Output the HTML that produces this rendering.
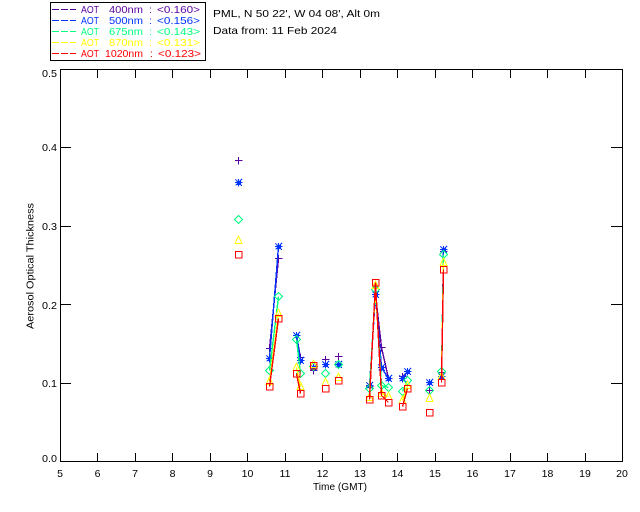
<!DOCTYPE html>
<html>
<head>
<meta charset="utf-8">
<style>
html,body{margin:0;padding:0;background:#fff;width:640px;height:512px;overflow:hidden}
svg{display:block}
text{font-family:"Liberation Sans",sans-serif;font-size:10.5px;fill:#000}
.c{text-anchor:middle}
.s{shape-rendering:crispEdges;fill:none}
</style>
</head>
<body>
<svg width="640" height="512" viewBox="0 0 640 512" xmlns="http://www.w3.org/2000/svg">
<defs>
<g id="p" class="s"><path d="M-3.5 0H4M0 -3.5V4"/></g>
<g id="a" class="s"><path d="M-3.5 0H4M0 -3.5V4M-3 -3L3.5 3.5M-3 3L3.5 -3.5M-1 -1H2V2H-1Z"/></g>
<path id="d" class="s" d="M0 -4L4 0L0 4L-4 0Z"/>
<path id="t" class="s" d="M0 -4.5L3.5 3H-3.5Z"/>
<rect id="q" class="s" x="-3" y="-3" width="6.5" height="6.5"/>
</defs>

<!-- Axes -->
<g class="s" stroke="#000" stroke-width="1">
<rect x="60.5" y="69.5" width="562" height="392"/>
<path d="M97.5 461V453M135.5 461V453M172.5 461V453M210.5 461V453M247.5 461V453M285.5 461V453M322.5 461V453M360.5 461V453M397.5 461V453M435.5 461V453M472.5 461V453M510.5 461V453M547.5 461V453M585.5 461V453"/>
<path d="M97.5 70V78M135.5 70V78M172.5 70V78M210.5 70V78M247.5 70V78M285.5 70V78M322.5 70V78M360.5 70V78M397.5 70V78M435.5 70V78M472.5 70V78M510.5 70V78M547.5 70V78M585.5 70V78"/>
<path d="M61 383.5H71M61 304.5H71M61 226.5H71M61 147.5H71"/>
<path d="M622 383.5H611M622 304.5H611M622 226.5H611M622 147.5H611"/>
</g>

<!-- Y tick labels -->
<text x="42" y="77" textLength="15" lengthAdjust="spacingAndGlyphs">0.5</text>
<text x="42" y="151" textLength="15" lengthAdjust="spacingAndGlyphs">0.4</text>
<text x="42" y="230" textLength="15" lengthAdjust="spacingAndGlyphs">0.3</text>
<text x="42" y="309" textLength="15" lengthAdjust="spacingAndGlyphs">0.2</text>
<text x="42" y="387" textLength="15" lengthAdjust="spacingAndGlyphs">0.1</text>
<text x="42" y="462" textLength="15" lengthAdjust="spacingAndGlyphs">0.0</text>

<!-- X tick labels -->
<g class="c">
<text class="c" x="60" y="477">5</text>
<text class="c" x="97.5" y="477">6</text>
<text class="c" x="135" y="477">7</text>
<text class="c" x="172.5" y="477">8</text>
<text class="c" x="210" y="477">9</text>
<text class="c" x="247.5" y="477">10</text>
<text class="c" x="285" y="477">11</text>
<text class="c" x="322.5" y="477">12</text>
<text class="c" x="360" y="477">13</text>
<text class="c" x="397.5" y="477">14</text>
<text class="c" x="435" y="477">15</text>
<text class="c" x="472.5" y="477">16</text>
<text class="c" x="510" y="477">17</text>
<text class="c" x="547.5" y="477">18</text>
<text class="c" x="585" y="477">19</text>
<text class="c" x="622" y="477">20</text>
</g>

<text x="313" y="490" textLength="54" lengthAdjust="spacingAndGlyphs">Time (GMT)</text>
<text transform="translate(33.5,329) rotate(-90)" x="0" y="0" textLength="126" lengthAdjust="spacingAndGlyphs">Aerosol Optical Thickness</text>

<!-- Header text -->
<text x="213" y="17" textLength="167" lengthAdjust="spacingAndGlyphs">PML, N 50 22', W 04 08', Alt 0m</text>
<text x="213" y="34" textLength="124" lengthAdjust="spacingAndGlyphs">Data from: 11 Feb 2024</text>

<!-- Legend -->
<rect class="s" x="50.5" y="2.5" width="155" height="58" stroke="#000"/>
<g class="s" stroke-width="1" stroke-dasharray="7 2">
<path d="M52 9.5H76" stroke="#5a00a0"/>
<path d="M52 20.5H76" stroke="#0033ff"/>
<path d="M52 31.5H76" stroke="#00ff80"/>
<path d="M52 42.5H76" stroke="#ffff00"/>
<path d="M52 53.5H76" stroke="#ff0000"/>
</g>
<text style="fill:#5a00a0" x="81" y="13" textLength="18" lengthAdjust="spacingAndGlyphs">AOT</text>
<text style="fill:#5a00a0" x="109" y="13" textLength="34" lengthAdjust="spacingAndGlyphs">400nm</text>
<text style="fill:#5a00a0" x="149" y="13">:</text>
<text style="fill:#5a00a0" x="157" y="13" textLength="43" lengthAdjust="spacingAndGlyphs">&lt;0.160&gt;</text>
<text style="fill:#0033ff" x="81" y="24" textLength="18" lengthAdjust="spacingAndGlyphs">AOT</text>
<text style="fill:#0033ff" x="109" y="24" textLength="34" lengthAdjust="spacingAndGlyphs">500nm</text>
<text style="fill:#0033ff" x="149" y="24">:</text>
<text style="fill:#0033ff" x="157" y="24" textLength="43" lengthAdjust="spacingAndGlyphs">&lt;0.156&gt;</text>
<text style="fill:#00ff80" x="81" y="35" textLength="18" lengthAdjust="spacingAndGlyphs">AOT</text>
<text style="fill:#00ff80" x="109" y="35" textLength="34" lengthAdjust="spacingAndGlyphs">675nm</text>
<text style="fill:#00ff80" x="149" y="35">:</text>
<text style="fill:#00ff80" x="157" y="35" textLength="43" lengthAdjust="spacingAndGlyphs">&lt;0.143&gt;</text>
<text style="fill:#ffff00" x="81" y="46" textLength="18" lengthAdjust="spacingAndGlyphs">AOT</text>
<text style="fill:#ffff00" x="109" y="46" textLength="34" lengthAdjust="spacingAndGlyphs">870nm</text>
<text style="fill:#ffff00" x="149" y="46">:</text>
<text style="fill:#ffff00" x="157" y="46" textLength="43" lengthAdjust="spacingAndGlyphs">&lt;0.131&gt;</text>
<text style="fill:#ff0000" x="81" y="57" textLength="18" lengthAdjust="spacingAndGlyphs">AOT</text>
<text style="fill:#ff0000" x="105" y="57" textLength="38" lengthAdjust="spacingAndGlyphs">1020nm</text>
<text style="fill:#ff0000" x="150" y="57">:</text>
<text style="fill:#ff0000" x="158" y="57" textLength="43" lengthAdjust="spacingAndGlyphs">&lt;0.123&gt;</text>

<!-- Purple series -->
<g stroke="#5a00a0">
<g class="s" stroke-width="1.4">
<path d="M269.5 348.5L278.5 258.5"/><path d="M296.5 335.5L300.5 357.5"/>
<path d="M369.5 386.5L375.5 294.5L381.5 347.5L388.5 378.5"/><path d="M402.5 376.5L407.5 371.5"/><path d="M441.5 372.5L443.5 251.5"/>
</g>
<use href="#p" x="238.5" y="160.5"/><use href="#p" x="269.5" y="348.5"/><use href="#p" x="278.5" y="258.5"/><use href="#p" x="296.5" y="335.5"/><use href="#p" x="300.5" y="357.5"/><use href="#p" x="313.5" y="370.5"/><use href="#p" x="325.5" y="359.5"/><use href="#p" x="338.5" y="356.5"/><use href="#p" x="369.5" y="386.5"/><use href="#p" x="375.5" y="294.5"/><use href="#p" x="381.5" y="347.5"/><use href="#p" x="388.5" y="378.5"/><use href="#p" x="402.5" y="376.5"/><use href="#p" x="407.5" y="371.5"/><use href="#p" x="429.5" y="390.5"/><use href="#p" x="441.5" y="372.5"/><use href="#p" x="443.5" y="251.5"/>
</g>

<!-- Blue series -->
<g stroke="#0033ff">
<g class="s" stroke-width="1.4">
<path d="M269.5 358.5L278.5 246.5"/><path d="M296.5 335.5L300.5 360.5"/>
<path d="M369.5 385.5L375.5 294.5L381.5 367.5L388.5 378.5"/><path d="M402.5 378.5L407.5 371.5"/><path d="M441.5 376.5L443.5 249.5"/>
</g>
<use href="#a" x="238.5" y="182.5"/><use href="#a" x="269.5" y="358.5"/><use href="#a" x="278.5" y="246.5"/><use href="#a" x="296.5" y="335.5"/><use href="#a" x="300.5" y="360.5"/><use href="#a" x="313.5" y="367.5"/><use href="#a" x="325.5" y="364.5"/><use href="#a" x="338.5" y="364.5"/><use href="#a" x="369.5" y="385.5"/><use href="#a" x="375.5" y="294.5"/><use href="#a" x="381.5" y="367.5"/><use href="#a" x="388.5" y="378.5"/><use href="#a" x="402.5" y="378.5"/><use href="#a" x="407.5" y="371.5"/><use href="#a" x="429.5" y="382.5"/><use href="#a" x="441.5" y="376.5"/><use href="#a" x="443.5" y="249.5"/>
</g>

<!-- Green series -->
<g stroke="#00ff80">
<g class="s" stroke-width="1.4">
<path d="M269.5 370.5L278.5 296.5"/><path d="M296.5 339.5L300.5 373.5"/>
<path d="M369.5 388.5L375.5 289.5L381.5 385.5L388.5 387.5"/><path d="M402.5 391.5L407.5 380.5"/><path d="M441.5 371.5L443.5 254.5"/>
</g>
<use href="#d" x="238.5" y="219.5"/><use href="#d" x="269.5" y="370.5"/><use href="#d" x="278.5" y="296.5"/><use href="#d" x="296.5" y="339.5"/><use href="#d" x="300.5" y="373.5"/><use href="#d" x="313.5" y="366.5"/><use href="#d" x="325.5" y="373.5"/><use href="#d" x="338.5" y="364.5"/><use href="#d" x="369.5" y="388.5"/><use href="#d" x="375.5" y="289.5"/><use href="#d" x="381.5" y="385.5"/><use href="#d" x="388.5" y="387.5"/><use href="#d" x="402.5" y="391.5"/><use href="#d" x="407.5" y="380.5"/><use href="#d" x="429.5" y="390.5"/><use href="#d" x="441.5" y="371.5"/><use href="#d" x="443.5" y="254.5"/>
</g>

<!-- Yellow series -->
<g stroke="#ffff00">
<g class="s" stroke-width="1.4">
<path d="M269.5 381.5L278.5 313.5"/><path d="M296.5 367.5L300.5 386.5"/>
<path d="M369.5 397.5L375.5 285.5L381.5 393.5L388.5 396.5"/><path d="M402.5 400.5L407.5 385.5"/><path d="M441.5 376.5L443.5 262.5"/>
</g>
<use href="#t" x="238.5" y="240.5"/><use href="#t" x="269.5" y="381.5"/><use href="#t" x="278.5" y="313.5"/><use href="#t" x="296.5" y="367.5"/><use href="#t" x="300.5" y="386.5"/><use href="#t" x="313.5" y="364.5"/><use href="#t" x="325.5" y="382.5"/><use href="#t" x="338.5" y="377.5"/><use href="#t" x="369.5" y="397.5"/><use href="#t" x="375.5" y="285.5"/><use href="#t" x="381.5" y="393.5"/><use href="#t" x="388.5" y="396.5"/><use href="#t" x="402.5" y="400.5"/><use href="#t" x="407.5" y="385.5"/><use href="#t" x="429.5" y="398.5"/><use href="#t" x="441.5" y="376.5"/><use href="#t" x="443.5" y="262.5"/>
</g>

<!-- Red series -->
<g stroke="#ff0000">
<g class="s" stroke-width="1.4">
<path d="M269.5 386.5L278.5 318.5"/><path d="M296.5 373.5L300.5 393.5"/>
<path d="M369.5 399.5L375.5 282.5L381.5 395.5L388.5 402.5"/><path d="M402.5 406.5L407.5 388.5"/><path d="M441.5 382.5L443.5 269.5"/>
</g>
<use href="#q" x="238.5" y="254.5"/><use href="#q" x="269.5" y="386.5"/><use href="#q" x="278.5" y="318.5"/><use href="#q" x="296.5" y="373.5"/><use href="#q" x="300.5" y="393.5"/><use href="#q" x="313.5" y="365.5"/><use href="#q" x="325.5" y="388.5"/><use href="#q" x="338.5" y="380.5"/><use href="#q" x="369.5" y="399.5"/><use href="#q" x="375.5" y="282.5"/><use href="#q" x="381.5" y="395.5"/><use href="#q" x="388.5" y="402.5"/><use href="#q" x="402.5" y="406.5"/><use href="#q" x="407.5" y="388.5"/><use href="#q" x="429.5" y="412.5"/><use href="#q" x="441.5" y="382.5"/><use href="#q" x="443.5" y="269.5"/>
</g>
</svg>
</body>
</html>
